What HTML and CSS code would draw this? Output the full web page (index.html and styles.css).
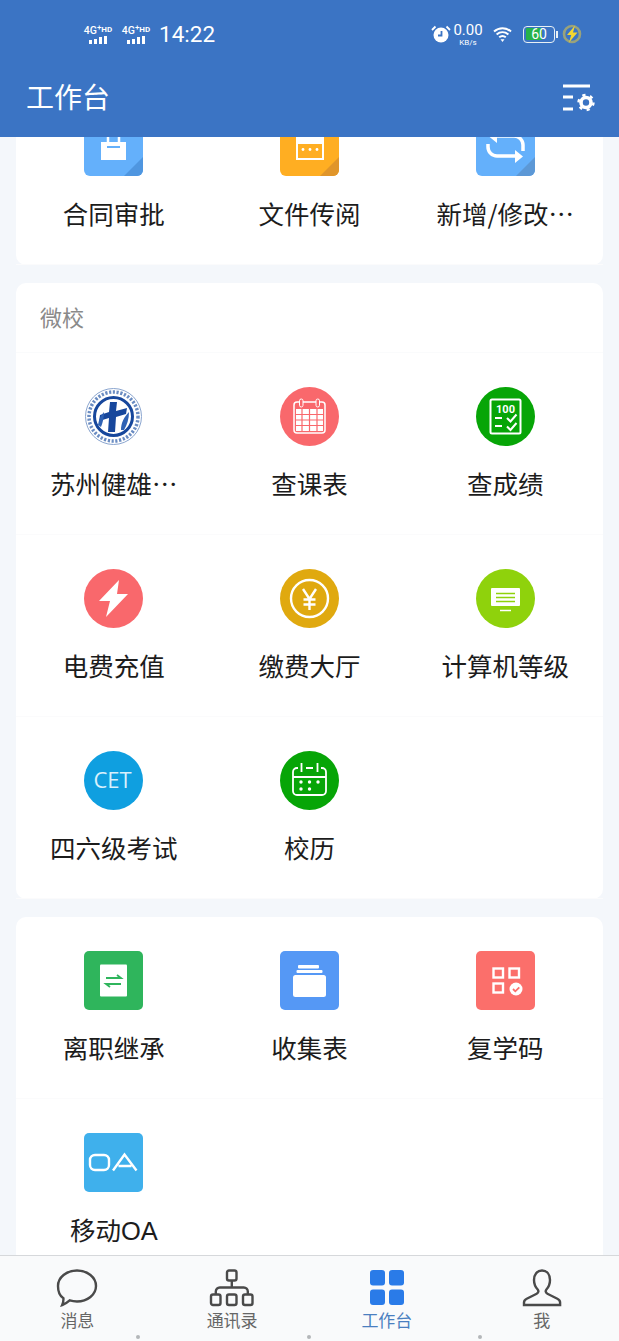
FILE: index.html
```html
<!DOCTYPE html>
<html lang="zh-CN">
<head>
  <meta charset="UTF-8">
  <meta name="viewport" content="width=device-width, initial-scale=1.0">
  <title>工作台</title>
  <link rel="stylesheet" href="styles.css">
</head>
<body>
  <div class="app">
    <header class="header">
      <div class="status-bar">
        <div class="status-left">
          <div class="signal">
            <div class="signal-label">4G<sup>+</sup><b>HD</b></div>
            <div class="bars"><i class="b1"></i><i class="b2"></i><i class="b3"></i><i class="b4"></i></div>
          </div>
          <div class="signal">
            <div class="signal-label">4G<sup>+</sup><b>HD</b></div>
            <div class="bars"><i class="b1"></i><i class="b2"></i><i class="b3"></i><i class="b4"></i></div>
          </div>
          <span class="time">14:22</span>
        </div>
        <div class="status-right">
          <svg class="alarm" width="20" height="18" viewBox="0 0 20 18">
            <circle cx="10" cy="10" r="7.500" fill="#fff"/>
            <path d="M10.500 6v4.500h-3.500" fill="none" stroke="#3b74c4" stroke-width="1.800"/>
            <path d="M1 5l3.500-3.500M19 5l-3.500-3.500" stroke="#fff" stroke-width="1.800"/>
          </svg>
          <div class="speed"><span class="speed-num">0.00</span><span class="speed-unit">KB/s</span></div>
          <svg class="wifi" width="19" height="16" viewBox="0 0 19 16">
            <path d="M1 5.500c5-4.500 12-4.500 17 0M3.600 8.500c3.500-3 8.300-3 11.800 0M6.200 11.300c2-1.600 4.600-1.600 6.600 0" fill="none" stroke="#fff" stroke-width="2"/>
            <path d="M7.500 13.200h4l-2 2.800z" fill="#fff"/>
          </svg>
          <div class="battery"><div class="battery-body"><span class="battery-fill"></span><span class="battery-num">60</span></div><i class="battery-cap"></i></div>
          <svg class="charge" width="20" height="20" viewBox="0 0 20 20">
            <circle cx="10" cy="10" r="8" fill="none" stroke="#98a27c" stroke-width="2.600"/>
            <path d="M13 1.500L5 11h4.200L7 18.500 15.500 8.500h-4.500z" fill="#f4d62f"/>
          </svg>
        </div>
      </div>
      <div class="title-bar">
        <h1>工作台</h1>
        <svg class="settings" width="33" height="28" viewBox="0 0 33 28">
          <path d="M1 2h27M1 13h10M1 25h10" stroke="#fff" stroke-width="3" fill="none"/>
          <circle cx="24" cy="18.500" r="5" fill="none" stroke="#fff" stroke-width="3.600"/>
          <circle cx="24" cy="18.500" r="7.500" fill="none" stroke="#fff" stroke-width="2.400" stroke-dasharray="3.200 4.650"/>
        </svg>
      </div>
    </header>

    <main class="content">
      <section class="card card-scrolled">
        <div class="grid">
          <div class="cell">
            <svg class="icon" viewBox="0 0 59 59">
              <rect width="59" height="59" rx="6" fill="#64b0fb"/>
              <path d="M59 40v13a6 6 0 0 1-6 6H40z" fill="#4f96e0"/>
              <path d="M17 25h25v18H17z" fill="#fff"/>
              <path d="M24 19v7M35 19v7" stroke="#fff" stroke-width="2.500"/>
              <path d="M23 30h13" stroke="#64b0fb" stroke-width="2"/>
            </svg>
            <span class="cell-name">合同审批</span>
          </div>
          <div class="cell">
            <svg class="icon" viewBox="0 0 59 59">
              <rect width="59" height="59" rx="6" fill="#ffae22"/>
              <path d="M59 40v13a6 6 0 0 1-6 6H40z" fill="#e0952a"/>
              <rect x="16" y="14" width="28" height="29" fill="#fff"/>
              <rect x="18" y="27" width="24" height="14" fill="#ffae22"/>
              <circle cx="23" cy="32.500" r="1.400" fill="#fff"/><circle cx="30" cy="32.500" r="1.400" fill="#fff"/><circle cx="37" cy="32.500" r="1.400" fill="#fff"/>
            </svg>
            <span class="cell-name">文件传阅</span>
          </div>
          <div class="cell">
            <svg class="icon" viewBox="0 0 59 59">
              <rect width="59" height="59" rx="6" fill="#64b0fb"/>
              <path d="M59 40v13a6 6 0 0 1-6 6H40z" fill="#5c98d6"/>
              <path d="M12 27v3a9 9 0 0 0 9 9h19M47 34v-6a9 9 0 0 0-9-9H21" fill="none" stroke="#fff" stroke-width="3.500"/>
              <path d="M39 33l8 6.500-8 6.500zM21 13l-8 6.500 8 6.500z" fill="#fff"/>
            </svg>
            <span class="cell-name">新增/修改…</span>
          </div>
        </div>
      </section>

      <section class="card">
        <div class="card-title">微校</div>
        <div class="grid">
          <div class="cell">
            <svg class="icon" viewBox="0 0 59 59">
              <circle cx="29.500" cy="29.500" r="28" fill="#fff" stroke="#8aa5cf" stroke-width="1"/>
              <circle cx="29.500" cy="29.500" r="24.500" fill="none" stroke="#6a8cc2" stroke-width="3.500" stroke-dasharray="2.200 1.600"/>
              <circle cx="29.500" cy="29.500" r="19" fill="#fff" stroke="#17479c" stroke-width="3"/>
              <path d="M26 15h7l-1 9 11-3-1 6-10 3-1 15h-7l1-14-10 3 1-6 9-3z" fill="#17479c"/>
              <path d="M14 38c1-6 3-10 6-13 0 5-1 10-3 15zM37 43c0-7 3-13 8-18 0 7-2 13-5 18z" fill="#2f62b4"/>
            </svg>
            <span class="cell-name">苏州健雄…</span>
          </div>
          <div class="cell">
            <svg class="icon" viewBox="0 0 59 59">
              <circle cx="29.500" cy="29.500" r="29.500" fill="#f9686c"/>
              <rect x="14" y="15" width="31" height="31" rx="3" fill="none" stroke="#fff" stroke-width="1.500"/>
              <path d="M16 22h27v22H16z" fill="#fff"/>
              <path d="M16 27.500h27M16 33h27M16 38.500h27M22 22v22M29.500 22v22M37 22v22" stroke="#f9686c" stroke-width="1.200"/>
              <rect x="19.500" y="12" width="3.500" height="8" rx="1.700" fill="#f9686c" stroke="#fff" stroke-width="1"/>
              <rect x="36" y="12" width="3.500" height="8" rx="1.700" fill="#f9686c" stroke="#fff" stroke-width="1"/>
            </svg>
            <span class="cell-name">查课表</span>
          </div>
          <div class="cell">
            <svg class="icon" viewBox="0 0 59 59">
              <circle cx="29.500" cy="29.500" r="29.500" fill="#07a507"/>
              <rect x="14.500" y="12.500" width="30" height="34" rx="1.500" fill="none" stroke="#fff" stroke-width="2"/>
              <text class="score" x="29.500" y="25.500" text-anchor="middle">100</text>
              <path d="M19 31h7M19 39h7M31 31l3.500 3.500 6-7M31 39.500l3.500 3.500 6-7" fill="none" stroke="#fff" stroke-width="2"/>
            </svg>
            <span class="cell-name">查成绩</span>
          </div>
          <div class="cell">
            <svg class="icon" viewBox="0 0 59 59">
              <circle cx="29.500" cy="29.500" r="29.500" fill="#f9686c"/>
              <path d="M35 11L15 32h11l-4 16 22-23H33z" fill="#fff"/>
            </svg>
            <span class="cell-name">电费充值</span>
          </div>
          <div class="cell">
            <svg class="icon" viewBox="0 0 59 59">
              <circle cx="29.500" cy="29.500" r="29.500" fill="#e0a90f"/>
              <circle cx="29.500" cy="29.500" r="18.500" fill="none" stroke="#fff" stroke-width="2.400"/>
              <path d="M23 20l6.500 10 6.500-10M29.500 30v11M23.500 30.500h12M23.500 35.500h12" fill="none" stroke="#fff" stroke-width="2.400"/>
            </svg>
            <span class="cell-name">缴费大厅</span>
          </div>
          <div class="cell">
            <svg class="icon" viewBox="0 0 59 59">
              <circle cx="29.500" cy="29.500" r="29.500" fill="#8fd20c"/>
              <rect x="15" y="19" width="29" height="18" rx="1" fill="#fff"/>
              <path d="M20 24.500h19M20 28.500h19M20 32.500h19" stroke="#8fd20c" stroke-width="1.500"/>
              <path d="M24 41.500h11" stroke="#fff" stroke-width="1.500"/>
            </svg>
            <span class="cell-name">计算机等级</span>
          </div>
          <div class="cell">
            <svg class="icon" viewBox="0 0 59 59">
              <circle cx="29.500" cy="29.500" r="29.500" fill="#0f9fe0"/>
              <text class="cet" x="28.500" y="37" text-anchor="middle">CET</text>
            </svg>
            <span class="cell-name">四六级考试</span>
          </div>
          <div class="cell">
            <svg class="icon" viewBox="0 0 59 59">
              <circle cx="29.500" cy="29.500" r="29.500" fill="#07a507"/>
              <path d="M18 17h-1a4 4 0 0 0-4 4v19a4 4 0 0 0 4 4h25a4 4 0 0 0 4-4V21a4 4 0 0 0-4-4h-1M13.500 26h32" fill="none" stroke="#fff" stroke-width="1.800"/>
              <path d="M21.500 12v9M37.500 12v9M26 17h7" stroke="#fff" stroke-width="1.800" fill="none"/>
              <circle cx="21" cy="31" r="1.700" fill="#fff"/><circle cx="29.500" cy="31" r="1.700" fill="#fff"/><circle cx="38" cy="31" r="1.700" fill="#fff"/>
              <circle cx="21" cy="38" r="1.700" fill="#fff"/><circle cx="29.500" cy="38" r="1.700" fill="#fff"/>
            </svg>
            <span class="cell-name">校历</span>
          </div>
          <div class="cell"></div>
        </div>
      </section>

      <section class="card">
        <div class="grid">
          <div class="cell">
            <svg class="icon" viewBox="0 0 59 59">
              <rect width="59" height="59" rx="5" fill="#2fb55c"/>
              <rect x="16" y="13.500" width="27" height="32" rx="1" fill="#fff"/>
              <path d="M22 27h15l-4-3M37 33H22l4 3" fill="none" stroke="#2fb55c" stroke-width="1.800"/>
            </svg>
            <span class="cell-name">离职继承</span>
          </div>
          <div class="cell">
            <svg class="icon" viewBox="0 0 59 59">
              <rect width="59" height="59" rx="5" fill="#5598f5"/>
              <rect x="18" y="14" width="21" height="3.500" rx="1" fill="#fff"/>
              <rect x="16.500" y="19" width="26" height="3" rx="1" fill="#fff"/>
              <rect x="13" y="24" width="33" height="22" rx="2.500" fill="#fff"/>
            </svg>
            <span class="cell-name">收集表</span>
          </div>
          <div class="cell">
            <svg class="icon" viewBox="0 0 59 59">
              <rect width="59" height="59" rx="5" fill="#fb6f6b"/>
              <rect x="17.500" y="17.500" width="9.500" height="9" fill="none" stroke="#fff" stroke-width="2.400"/>
              <rect x="33.500" y="17.500" width="9.500" height="9" fill="none" stroke="#fff" stroke-width="2.400"/>
              <rect x="17.500" y="32.500" width="9.500" height="9" fill="none" stroke="#fff" stroke-width="2.400"/>
              <circle cx="40" cy="38" r="6.500" fill="#fff"/>
              <path d="M37 38l2.300 2.300 4-4" fill="none" stroke="#fb6f6b" stroke-width="1.800"/>
            </svg>
            <span class="cell-name">复学码</span>
          </div>
          <div class="cell">
            <svg class="icon" viewBox="0 0 59 59">
              <rect width="59" height="59" rx="5" fill="#3fb0ec"/>
              <rect x="6" y="22" width="19" height="15" rx="5" fill="none" stroke="#fff" stroke-width="2.400"/>
              <path d="M29 37.500L40.500 21.500 52.500 37.500M34.500 33h13" fill="none" stroke="#fff" stroke-width="2.400"/>
            </svg>
            <span class="cell-name">移动<span class="latin">OA</span></span>
          </div>
        </div>
      </section>
    </main>

    <nav class="tabbar">
      <div class="tab">
        <svg class="tab-icon" width="44" height="38" viewBox="0 0 44 38">
          <path d="M22 1.500c10.500 0 19 6.900 19 15.500s-8.500 15.500-19 15.500c-2.600 0-5-.4-7.300-1.100-2.200 2-4.700 3.600-7.500 4.600 1-2.300 1.400-4.500 1.200-6.800C4.800 27 3 22.300 3 17 3 8.400 11.500 1.500 22 1.500z" fill="none" stroke="#4a4a4a" stroke-width="2.400"/>
        </svg>
        <span>消息</span>
      </div>
      <div class="tab">
        <svg class="tab-icon" width="46" height="38" viewBox="0 0 46 38">
          <g fill="none" stroke="#4a4a4a" stroke-width="2.400">
            <rect x="18" y="1.500" width="9.500" height="10" rx="2"/>
            <rect x="2" y="25.500" width="9.500" height="10.500" rx="2"/>
            <rect x="18" y="25.500" width="9.500" height="10.500" rx="2"/>
            <rect x="34" y="25.500" width="9.500" height="10.500" rx="2"/>
            <path d="M22.800 11.500v7M6.800 25.500v-3a4 4 0 0 1 4-4h24a4 4 0 0 1 4 4v3"/>
          </g>
        </svg>
        <span>通讯录</span>
      </div>
      <div class="tab tab-active">
        <svg class="tab-icon" width="36" height="38" viewBox="0 0 36 38">
          <rect x="1" y="1" width="15" height="15.500" rx="3" fill="#2a7be8"/>
          <rect x="20" y="1" width="15" height="15.500" rx="3" fill="#2a7be8"/>
          <rect x="1" y="20.500" width="15" height="15.500" rx="3" fill="#2a7be8"/>
          <rect x="20" y="20.500" width="15" height="15.500" rx="3" fill="#2a7be8"/>
        </svg>
        <span>工作台</span>
      </div>
      <div class="tab">
        <svg class="tab-icon" width="40" height="38" viewBox="0 0 40 38">
          <path d="M20 1.500c5 0 8 4 8 9.500 0 4-1.600 7.300-3.600 9.500-1.200 1.400-.8 3.300 1 4.200l10 5c1.800.9 2.700 2.300 2.700 3.800v2.500H2v-2.500c0-1.500.9-2.900 2.700-3.800l10-5c1.800-.9 2.200-2.800 1-4.200C13.600 18.300 12 15 12 11c0-5.500 3-9.500 8-9.500z" fill="none" stroke="#4a4a4a" stroke-width="2.400"/>
        </svg>
        <span>我</span>
      </div>
      <div class="nav-dots"><i></i><i></i><i></i></div>
    </nav>
  </div>
</body>
</html>
```
FILE: styles.css
```css
* {
  box-sizing: border-box;
}
body {
  margin: 0;
  font-family: "Noto Sans CJK SC", "Noto Sans", sans-serif;
  background: #f4f7fb;
}
.app {
  width: 619px;
  height: 1341px;
  display: flex;
  flex-direction: column;
  overflow: hidden;
}

/* header */
.header {
  height: 137px;
  flex: none;
  background: #3b74c4;
  color: #fff;
  padding: 0 24px 0 26px;
  position: relative;
  z-index: 2;
}
.status-bar {
  height: 68px;
  padding: 20px 13px 0 56px;
  display: flex;
  justify-content: space-between;
  align-items: flex-start;
}
.status-left {
  display: flex;
  align-items: center;
  gap: 6px;
}
.signal {
  width: 32px;
  height: 18px;
  display: flex;
  flex-direction: column;
  align-items: center;
}
.signal-label {
  font: 500 10.500px/9px Roboto, sans-serif;
  white-space: nowrap;
}
.signal-label sup {
  font-size: 8px;
  line-height: 0;
}
.signal-label b {
  font-size: 8px;
  vertical-align: 2px;
}
.bars {
  display: flex;
  align-items: flex-end;
  gap: 2px;
  height: 8px;
  margin-top: 1px;
}
.bars i {
  width: 3px;
  background: #fff;
}
.b1 { height: 4px; }
.b2 { height: 5px; }
.b3 { height: 7px; }
.b4 { height: 8px; }
.time {
  font: 22.500px/28px Roboto, sans-serif;
  margin-left: 1px;
}
.status-right {
  display: flex;
  align-items: center;
  gap: 2px;
  height: 28px;
}
.speed {
  width: 30px;
  display: flex;
  flex-direction: column;
  align-items: center;
  margin-right: 8px;
}
.speed-num {
  font: 15px/16px Roboto, sans-serif;
}
.speed-unit {
  font: 8px/9px Roboto, sans-serif;
}
.wifi {
  margin-right: 9px;
}
.battery {
  display: flex;
  align-items: center;
  margin-right: 2px;
}
.battery-body {
  width: 32px;
  height: 17px;
  border: 1.500px solid #e8f0f5;
  border-radius: 4px;
  padding: 1.500px;
  position: relative;
}
.battery-fill {
  display: block;
  width: 60%;
  height: 100%;
  background: #25b24a;
  border-radius: 1px;
}
.battery-num {
  position: absolute;
  inset: 0;
  text-align: center;
  font: 14px/14px Roboto, sans-serif;
}
.battery-cap {
  width: 2px;
  height: 7px;
  background: #e8f0f5;
  margin-left: 1px;
}
.title-bar {
  height: 56px;
  display: flex;
  justify-content: space-between;
  align-items: center;
}
.title-bar h1 {
  margin: 0;
  font-size: 28px;
  font-weight: 400;
  line-height: 56px;
}
.settings {
  margin-top: 3px;
}

/* scrolled list */
.content {
  flex: 1;
  min-height: 0;
  overflow: hidden;
  padding: 0 16px;
  display: flex;
  flex-direction: column;
  gap: 18px;
}
.card {
  background: #fff;
  border-radius: 10px;
  flex: none;
  width: 587px;
}
.card-scrolled {
  margin-top: -54px;
}
.card-title {
  height: 70px;
  padding: 14px 24px 0;
  font-size: 22px;
  line-height: 38px;
  color: #8a8a8a;
  border-bottom: 1px solid #fafbfc;
}
.grid {
  display: grid;
  grid-template-columns: repeat(3, 1fr);
}
.cell {
  height: 182px;
  padding-top: 34px;
  display: flex;
  flex-direction: column;
  align-items: center;
  border-bottom: 1px solid #fbfbfc;
}
.icon {
  width: 59px;
  height: 59px;
  flex: none;
}
.cell-name {
  margin-top: 17px;
  font-size: 25.500px;
  line-height: 40px;
  color: #1c1c1c;
  white-space: nowrap;
}
.latin {
  font-family: "Liberation Sans", sans-serif;
}
.score {
  font: 700 11px Roboto, sans-serif;
  fill: #fff;
}
.cet {
  font: 22px "Open Sans", sans-serif;
  fill: #d8f0fc;
}

/* bottom nav */
.tabbar {
  height: 86px;
  flex: none;
  background: #f9fafb;
  border-top: 1px solid #d6d8db;
  display: grid;
  grid-template-columns: repeat(4, 1fr);
  position: relative;
  z-index: 2;
}
.tab {
  padding-top: 13px;
  display: flex;
  flex-direction: column;
  align-items: center;
  font-size: 17px;
  line-height: 24px;
  color: #666;
}
.tab-icon {
  flex: none;
  margin-bottom: 1px;
}
.tab-active {
  color: #4a7fc0;
}
.nav-dots {
  position: absolute;
  left: 136px;
  bottom: 2px;
  width: 346px;
  display: flex;
  justify-content: space-between;
}
.nav-dots i {
  width: 4px;
  height: 4px;
  border-radius: 50%;
  background: #b4b6b9;
}
```
